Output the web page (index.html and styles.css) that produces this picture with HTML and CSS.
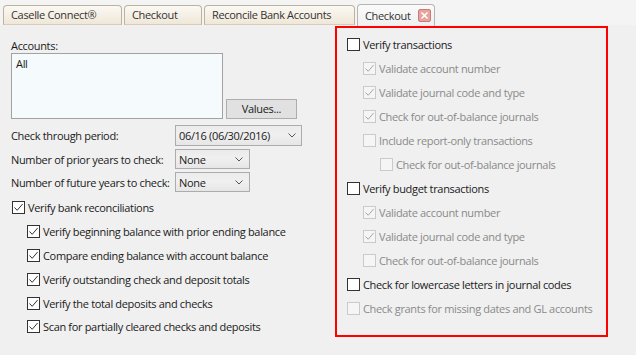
FILE: index.html
```html
<!DOCTYPE html>
<html>
<head>
<meta charset="utf-8">
<link rel="stylesheet" href="styles.css">
</head>
<body>
<div class="tabs">
  <div class="tab t1">Caselle Connect®</div>
  <div class="tab t2">Checkout</div>
  <div class="tab t3">Reconcile Bank Accounts</div>
  <div class="tab t4 active">Checkout
    <span class="close"><svg width="13" height="13" viewBox="0 0 13 13"><rect x="0.5" y="0.5" width="12" height="12" rx="1.5" fill="#e8a39e" stroke="#c87d78"/><path d="M3.5 3.5 L9.5 9.5 M9.5 3.5 L3.5 9.5" stroke="#fff" stroke-width="1.6"/></svg></span>
  </div>
</div>
<div class="content">
  <div class="left">
    <div class="lbl">Accounts:</div>
    <div class="accounts">
      <div class="listbox">All</div>
      <div class="btn">Values...</div>
    </div>
    <div class="form">
      <div class="frow r1"><span class="flabel">Check through period:</span><div class="select wide"><span>06/16 (06/30/2016)</span><svg class="chev" width="8" height="5" viewBox="0 0 8 5"><path d="M0.5 0.5 L4 4 L7.5 0.5" fill="none" stroke="#555"/></svg></div></div>
      <div class="frow"><span class="flabel">Number of prior years to check:</span><div class="select narrow"><span>None</span><svg class="chev" width="8" height="5" viewBox="0 0 8 5"><path d="M0.5 0.5 L4 4 L7.5 0.5" fill="none" stroke="#555"/></svg></div></div>
      <div class="frow"><span class="flabel">Number of future years to check:</span><div class="select narrow"><span>None</span><svg class="chev" width="8" height="5" viewBox="0 0 8 5"><path d="M0.5 0.5 L4 4 L7.5 0.5" fill="none" stroke="#555"/></svg></div></div>
    </div>
    <div class="checks">
      <div class="ck"><span class="box"><svg width="11" height="11" viewBox="0 0 11 11"><path d="M1.5 5.5 L4.2 8.3 L9.6 2" fill="none" stroke="#333" stroke-width="1"/></svg></span>Verify bank reconciliations</div>
      <div class="ck sub"><span class="box"><svg width="11" height="11" viewBox="0 0 11 11"><path d="M1.5 5.5 L4.2 8.3 L9.6 2" fill="none" stroke="#333" stroke-width="1"/></svg></span>Verify beginning balance with prior ending balance</div>
      <div class="ck sub"><span class="box"><svg width="11" height="11" viewBox="0 0 11 11"><path d="M1.5 5.5 L4.2 8.3 L9.6 2" fill="none" stroke="#333" stroke-width="1"/></svg></span>Compare ending balance with account balance</div>
      <div class="ck sub"><span class="box"><svg width="11" height="11" viewBox="0 0 11 11"><path d="M1.5 5.5 L4.2 8.3 L9.6 2" fill="none" stroke="#333" stroke-width="1"/></svg></span>Verify outstanding check and deposit totals</div>
      <div class="ck sub"><span class="box"><svg width="11" height="11" viewBox="0 0 11 11"><path d="M1.5 5.5 L4.2 8.3 L9.6 2" fill="none" stroke="#333" stroke-width="1"/></svg></span>Verify the total deposits and checks</div>
      <div class="ck sub"><span class="box"><svg width="11" height="11" viewBox="0 0 11 11"><path d="M1.5 5.5 L4.2 8.3 L9.6 2" fill="none" stroke="#333" stroke-width="1"/></svg></span>Scan for partially cleared checks and deposits</div>
    </div>
  </div>
  <div class="panel">
    <div class="ck"><span class="box"></span>Verify transactions</div>
    <div class="ck sub dis"><span class="box"><svg width="11" height="11" viewBox="0 0 11 11"><path d="M1.5 5.5 L4.2 8.3 L9.6 2" fill="none" stroke="#a8a8a8" stroke-width="1"/></svg></span>Validate account number</div>
    <div class="ck sub dis"><span class="box"><svg width="11" height="11" viewBox="0 0 11 11"><path d="M1.5 5.5 L4.2 8.3 L9.6 2" fill="none" stroke="#a8a8a8" stroke-width="1"/></svg></span>Validate journal code and type</div>
    <div class="ck sub dis"><span class="box"><svg width="11" height="11" viewBox="0 0 11 11"><path d="M1.5 5.5 L4.2 8.3 L9.6 2" fill="none" stroke="#a8a8a8" stroke-width="1"/></svg></span>Check for out-of-balance journals</div>
    <div class="ck sub dis"><span class="box"></span>Include report-only transactions</div>
    <div class="ck sub2 dis"><span class="box"></span>Check for out-of-balance journals</div>
    <div class="ck"><span class="box"></span>Verify budget transactions</div>
    <div class="ck sub dis"><span class="box"><svg width="11" height="11" viewBox="0 0 11 11"><path d="M1.5 5.5 L4.2 8.3 L9.6 2" fill="none" stroke="#a8a8a8" stroke-width="1"/></svg></span>Validate account number</div>
    <div class="ck sub dis"><span class="box"><svg width="11" height="11" viewBox="0 0 11 11"><path d="M1.5 5.5 L4.2 8.3 L9.6 2" fill="none" stroke="#a8a8a8" stroke-width="1"/></svg></span>Validate journal code and type</div>
    <div class="ck sub dis"><span class="box"></span>Check for out-of-balance journals</div>
    <div class="ck"><span class="box"></span>Check for lowercase letters in journal codes</div>
    <div class="ck dis"><span class="box"></span>Check grants for missing dates and GL accounts</div>
  </div>
</div>
</body>
</html>
```
FILE: styles.css
```css
* { box-sizing: border-box; }
html, body {
  margin: 0;
  padding: 0;
  background: #f0f0f0;
  width: 636px;
  height: 355px;
  overflow: hidden;
  font-family: "Open Sans", "Noto Sans", sans-serif;
  font-size: 11px;
  letter-spacing: -0.33px;
  color: #1a1a1a;
}
.tabs {
  display: flex;
  align-items: flex-end;
  gap: 2px;
  height: 25px;
  padding-left: 3px;
  background: #f4f4f4;
}
.tab {
  height: 20px;
  border: 1px solid #bdb29d;
  border-bottom-color: #d6ccb8;
  border-radius: 4px 4px 0 0;
  background: linear-gradient(#fbf9f4, #efe7d8);
  color: #333;
  padding-left: 7px;
  line-height: 18px;
  white-space: nowrap;
  display: flex;
  align-items: center;
}
.t1 { width: 119px; }
.t2 { width: 78px; }
.t3 { width: 151px; }
.t4 { width: 78px; }
.tab.active {
  height: 22px;
  margin-bottom: -1px;
  background: linear-gradient(#fafafa, #f0f0f0);
  border-color: #b5b5b5;
  border-bottom: none;
  justify-content: space-between;
  padding-right: 3px;
}
.close { display: flex; }
.content {
  display: flex;
  padding-top: 1px;
}
.left {
  width: 335px;
  padding-left: 11px;
  padding-top: 12px;
}
.lbl { line-height: 15px; }
.accounts {
  display: flex;
  align-items: flex-end;
}
.listbox {
  width: 212px;
  height: 66px;
  border: 1px solid #a2a2a2;
  background: #f5fbfd;
  padding: 2px 4px;
  line-height: 16px;
}
.btn {
  margin-left: 3px;
  width: 71px;
  height: 20px;
  border: 1px solid #adadad;
  background: #e1e1e1;
  text-align: center;
  line-height: 18px;
}
.form {
  margin-top: 6px;
  display: flex;
  flex-direction: column;
  gap: 3px;
}
.frow {
  display: flex;
  align-items: center;
  height: 20px;
}
.frow.r1 { height: 21px; }
.flabel { width: 164px; white-space: nowrap; }
.select {
  height: 100%;
  border: 1px solid #acacac;
  background: linear-gradient(#ebebeb, #f0f0f0 45%, #e6e6e6);
  display: flex;
  align-items: center;
  justify-content: space-between;
  padding: 0 6px 0 3px;
}
.select.wide { width: 127px; padding-right: 5px; }
.select.narrow { width: 75px; }
.chev { flex: none; }
.checks { margin-top: 4px; }
.ck {
  display: flex;
  align-items: center;
  height: 23.8px;
  white-space: nowrap;
}
.box {
  width: 13px;
  height: 13px;
  border: 1px solid #333;
  background: #fff;
  margin-right: 3px;
  flex: none;
  display: flex;
  align-items: center;
  justify-content: center;
}
.left .ck:first-child .box { margin-left: 1px; }
.left .sub { padding-left: 16px; }
.panel {
  width: 273px;
  height: 311px;
  border: 2px solid #ff0000;
  padding: 4px 0 0 10px;
}
.panel .ck { height: 24px; }
.panel .sub { padding-left: 16px; }
.panel .sub2 { padding-left: 33px; }
.dis { color: #8a8a8a; }
.dis .box {
  border-color: #cacaca;
  background: #f5f5f5;
}
```
